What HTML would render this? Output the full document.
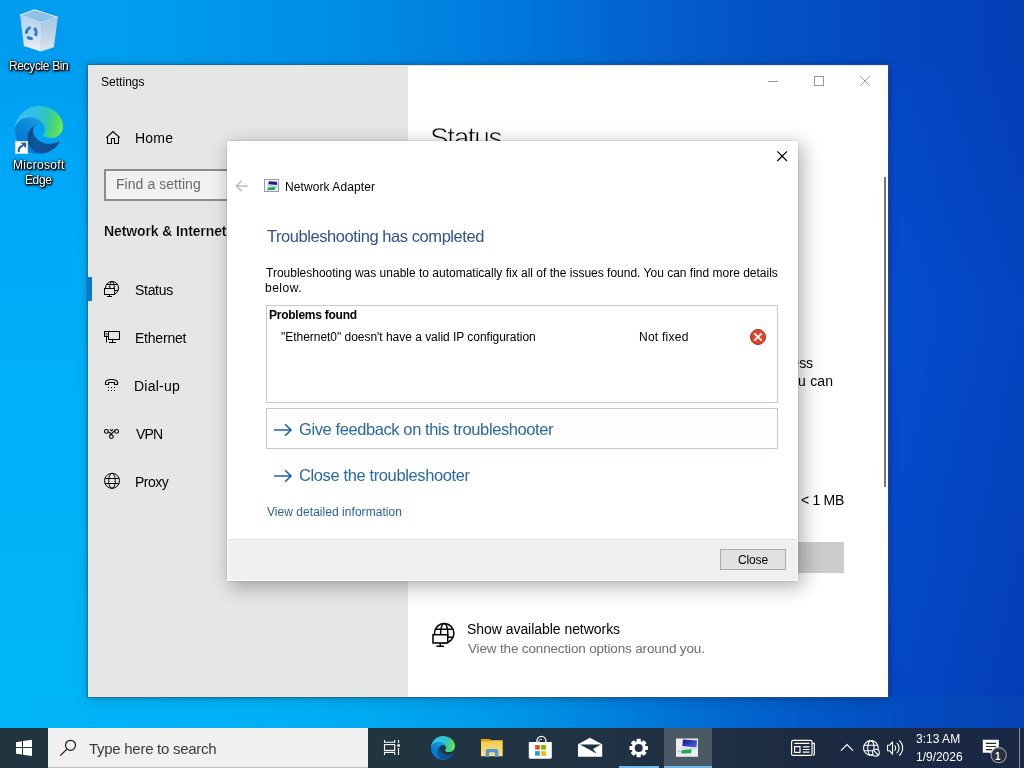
<!DOCTYPE html>
<html>
<head>
<meta charset="utf-8">
<title>Desktop</title>
<style>
*{box-sizing:border-box;margin:0;padding:0}
html,body{width:1024px;height:768px;overflow:hidden;background:#0a6fd4}
body{position:relative;font-family:"Liberation Sans",sans-serif;color:#000}
.abs{position:absolute}
.t{position:absolute;white-space:nowrap;line-height:normal;will-change:transform}
#wp-top{left:0;top:0;width:1024px;height:66px;background:linear-gradient(to right,#009cf0 0px,#009df0 120px,#0095ec 250px,#008ce7 350px,#0080e0 454px,#0170d6 560px,#0460cc 654px,#0454c5 750px,#044ac0 854px,#0444bb 930px,#043fb6 1024px)}
#wp-bot{left:0;top:696px;width:1024px;height:32px;background:linear-gradient(to right,#00b5f7 0px,#00aff4 300px,#00a6ef 400px,#0098e9 500px,#0084df 600px,#026dd3 700px,#035bc9 800px,#044cc0 900px,#0442b6 1024px)}
#wp-left{left:0;top:66px;width:88px;height:630px;background:linear-gradient(to bottom,#009ff1 0px,#00a9f8 134px,#00b1f8 334px,#00b4f7 534px,#00b5f7 630px)}
#wp-right{left:888px;top:66px;width:136px;height:630px;background:linear-gradient(to right,#054ccb 0px,#0447c4 62px,#0441ba 136px)}
#wp-right i{position:absolute;left:0;top:0;width:136px;height:630px;background:linear-gradient(to bottom,rgba(0,20,120,.08) 0px,rgba(0,40,160,.04) 120px,rgba(10,90,240,.10) 240px,rgba(0,40,150,.05) 500px,rgba(0,30,140,.10) 630px)}
#settings{left:88px;top:65px;width:800px;height:632px;background:#fff;box-shadow:0 0 0 1px rgba(80,80,92,.5),0 0 5px rgba(0,0,0,.28),0 3px 12px rgba(0,0,0,.14)}
#side{left:0;top:0;width:320px;height:632px;background:#e6e6e6}
#search{left:16px;top:104px;width:288px;height:32px;border:2px solid #8c8c8c;background:#f1f1f1}
#accent{left:0;top:212px;width:4px;height:24px;background:#0078d7}
#tophl{left:0;top:0;width:800px;height:1px;background:rgba(205,230,250,.85)}
#sb{left:796px;top:112px;width:2px;height:310px;background:#767676}
#graybar{left:600px;top:477px;width:156px;height:31px;background:#ccc}
#dialog{left:227px;top:141px;width:571px;height:440px;background:#fff;box-shadow:0 0 1.500px rgba(0,0,0,.3),4px 5px 18px 1px rgba(0,0,0,.30)}
#dfoot{left:1px;top:398px;width:569px;height:41px;background:#f0f0f0;border-top:1px solid #dfdfdf}
#pbox{left:39px;top:164px;width:512px;height:98px;border:1px solid #c9c9c9;background:#fff}
#fbox{left:39px;top:267px;width:512px;height:41px;border:1px solid #bccbd8;background:#fefeff}
#closebtn{left:493px;top:408px;width:66px;height:21px;border:1px solid #adadad;background:#e1e1e1}
#taskbar{left:0;top:728px;width:1024px;height:40px;background:linear-gradient(to right,#20353f 0px,#213540 400px,#203243 600px,#1c2b42 800px,#1a2745 1024px)}
#tsearch{left:48px;top:0;width:320px;height:40px;background:#f0f0f0;border-top:1px solid #f6f6f6;border-bottom:1px solid #bdbdbd}
#tactive{left:664px;top:0;width:48px;height:40px;background:#4b5965}
.ul{position:absolute;height:2px;top:38px;background:#76b9ed}
svg{position:absolute;overflow:visible}
</style>
</head>
<body>
<div id="wp-top" class="abs"></div>
<div id="wp-bot" class="abs"></div>
<div id="wp-left" class="abs"></div>
<div id="wp-right" class="abs"><i></i></div>

<svg width="0" height="0" style="left:0;top:0">
 <defs>
  <linearGradient id="eg1" gradientUnits="userSpaceOnUse" x1="58.7" y1="177" x2="237" y2="177"><stop offset="0" stop-color="#0c59a4"/><stop offset="1" stop-color="#114a8b"/></linearGradient>
  <linearGradient id="eg2" gradientUnits="userSpaceOnUse" x1="157.3" y1="99.8" x2="45.9" y2="221"><stop offset="0" stop-color="#1b9de2"/><stop offset=".16" stop-color="#1595df"/><stop offset=".67" stop-color="#0680d7"/><stop offset="1" stop-color="#0078d4"/></linearGradient>
  <linearGradient id="eg3" gradientUnits="userSpaceOnUse" x1="20" y1="60" x2="250" y2="110"><stop offset="0" stop-color="#35c1f1"/><stop offset=".35" stop-color="#30c2e2"/><stop offset=".62" stop-color="#2fc6b8"/><stop offset=".85" stop-color="#4fd86a"/><stop offset="1" stop-color="#6ee860"/></linearGradient>
  <radialGradient id="eg4" gradientUnits="userSpaceOnUse" cx="161" cy="182" r="95"><stop offset=".7" stop-color="#000" stop-opacity="0"/><stop offset=".86" stop-color="#000" stop-opacity=".3"/><stop offset="1" stop-color="#000" stop-opacity=".5"/></radialGradient>
  <symbol id="edge" viewBox="0 0 256 256">
   <path fill="url(#eg1)" d="M231,190.500c-3.400,1.800-6.900,3.400-10.500,4.700c-11.500,4.300-23.600,6.500-35.900,6.500c-47.300,0-88.500-32.500-88.500-74.300c0.100-11.400,6.400-21.900,16.400-27.300c-42.800,1.800-53.800,46.400-53.800,72.500c0,73.900,68.100,81.400,82.800,81.400c7.900,0,19.800-2.300,27-4.600l1.300-0.400c27.600-9.500,51-28.100,66.600-52.800c1.200-1.900,0.600-4.400-1.200-5.600C233.900,189.800,232.300,189.800,231,190.500z"/>
   <path fill="url(#eg4)" opacity=".35" d="M231,190.500c-3.400,1.800-6.900,3.400-10.500,4.700c-11.500,4.300-23.600,6.500-35.900,6.500c-47.300,0-88.500-32.500-88.500-74.300c0.100-11.400,6.400-21.900,16.400-27.300c-42.800,1.800-53.800,46.400-53.800,72.500c0,73.900,68.100,81.400,82.800,81.400c7.900,0,19.800-2.300,27-4.600l1.300-0.400c27.600-9.500,51-28.100,66.600-52.800c1.200-1.900,0.600-4.400-1.200-5.600C233.900,189.800,232.300,189.800,231,190.500z"/>
   <path fill="url(#eg2)" d="M105.700,241.400c-8.900-5.500-16.600-12.800-22.700-21.300c-26.300-36-18.400-86.500,17.600-112.800c3.800-2.700,7.700-5.200,11.900-7.200c3.100-1.500,8.400-4.100,15.500-4c10.100,0.100,19.600,4.900,25.700,13c4,5.400,6.300,11.900,6.400,18.700c0-0.200,24.500-79.600-80-79.600c-43.900,0-80,41.700-80,78.200c-0.200,19.300,4,38.500,12.100,56c27.600,58.800,94.800,87.600,156.400,67.100C147.500,256.100,124.500,253,105.700,241.400L105.700,241.400z"/>
   <path fill="url(#eg3)" d="M152.300,148.900c-0.800,1-3.300,2.500-3.300,5.700c0,2.600,1.700,5.100,4.700,7.200c14.400,10,41.500,8.700,41.600,8.700c10.700,0,21.100-2.900,30.300-8.300c18.800-11,30.400-31.100,30.400-52.900c0.300-22.400-8-37.300-11.300-43.900C223.500,23.900,177.700,0,128,0C58,0,1,56.200,0,126.200c0.500-36.500,36.800-66,80-66c3.500,0,23.500,0.300,42,10.100c16.300,8.600,24.900,18.900,30.800,29.200c6.200,10.700,7.300,24.100,7.300,29.500C160.100,134.300,157.400,142.300,152.300,148.900z"/>
  </symbol>
  <linearGradient id="rbL" x1="0" y1="0" x2="0" y2="1"><stop offset="0" stop-color="#b9d3ea"/><stop offset=".55" stop-color="#cddff0"/><stop offset="1" stop-color="#edf1f5"/></linearGradient>
  <linearGradient id="rbR" x1="0" y1="0" x2="0" y2="1"><stop offset="0" stop-color="#a9c8e4"/><stop offset=".6" stop-color="#c3d6e8"/><stop offset="1" stop-color="#e3e6ea"/></linearGradient>
 </defs>
</svg>
<!-- Recycle Bin -->
<svg style="left:0;top:0" width="80" height="60" viewBox="0 0 80 60">
 <path d="M20.200 15 L34.700 9.800 L57.700 17.300 L41.200 23 Z" fill="#8fc0e6" stroke="#d6e8f6" stroke-width="1.200" stroke-linejoin="round"/>
 <path d="M20.200 15.500 L41.200 23.500 L40.800 51.600 L23.900 46 Z" fill="url(#rbL)"/>
 <path d="M41.200 23.500 L57.700 17.800 L53.900 47.300 L40.800 51.600 Z" fill="url(#rbR)"/>
 <g fill="none" stroke="#2a7bd1" stroke-width="3.100" transform="rotate(12 31.300 32.800)">
  <path d="M26.700 34.500 A4.800 5.400 0 0 1 29.600 27.700" />
  <path d="M33.200 27.800 A4.800 5.400 0 0 1 35.800 34.800" />
  <path d="M33.700 37.700 A4.800 5.400 0 0 1 28.300 37.300" />
 </g>
</svg>
<!-- Edge -->
<svg style="left:15px;top:106px" width="48" height="48"><use href="#edge" width="48" height="48"/></svg>
<svg style="left:15px;top:141px" width="13" height="13" viewBox="0 0 13 13">
 <rect x="0.500" y="0.500" width="12" height="12" fill="#fff" stroke="#d0d8e0" stroke-width="1"/>
 <path d="M3.600 11.200C3.400 7.600 5 5.600 8 4.600" stroke="#1d5db6" stroke-width="2.100" fill="none"/>
 <path d="M5.600 1.800L11.200 1.600L11 7.200Z" fill="#1d5db6"/>
</svg>


<div id="settings" class="abs">
  <div id="side" class="abs">
    <div id="search" class="abs"></div>
    <div id="accent" class="abs"></div>
  </div>
  <div id="tophl" class="abs"></div>
  <div id="sb" class="abs"></div>
  <div id="graybar" class="abs"></div>
</div>
<svg style="left:0;top:0" width="1024" height="768" viewBox="0 0 1024 768" fill="none" stroke="#000" stroke-width="1">
 <!-- window controls (inactive gray) -->
 <g stroke="#999">
  <path d="M768 81.500H778"/>
  <rect x="814.500" y="76.500" width="9" height="9"/>
  <path d="M860.300 76.300L869.700 85.700M869.700 76.300L860.300 85.700"/>
 </g>
 <!-- home -->
 <path d="M106.300 137.700L113 131.500L119.700 137.700" stroke-width="1.100"/>
 <path d="M107.500 136.800V143.500H111.500V138.500H114.500V143.500H118.500V136.800" stroke-width="1.100"/>
 <!-- status: globe + monitor -->
 <g>
  <circle cx="112" cy="288" r="6.500"/>
  <ellipse cx="112" cy="288" rx="2.300" ry="6.500"/>
  <path d="M106.500 284.500H117.500M114.500 290.500H118"/>
  <rect x="104.500" y="288.500" width="10" height="6" fill="#e6e6e6"/>
  <path d="M109.500 294.500V296.500M107 296.500H112"/>
 </g>
 <!-- ethernet -->
 <g>
  <rect x="108.500" y="331.500" width="11" height="8"/>
  <rect x="104.500" y="331.500" width="4" height="5"/>
  <path d="M105.500 333.500H107.500M105.500 334.500L106.500 335.500L107.500 334.500" stroke-width=".8"/>
  <path d="M106.500 336.500V342.500M112.500 339.500V342.500M109 342.500H116"/>
 </g>
 <!-- dial-up -->
 <g>
  <path d="M105.500 384.500V382.600Q105.500 379.500 111.500 379.500Q117.500 379.500 117.500 382.600V384.500H114.500V382.500H108.500V384.500Z" stroke-width="1.100" stroke-linejoin="round"/>
  <g fill="#000" stroke="none">
   <rect x="108" y="387" width="1" height="1"/><rect x="111" y="387" width="1" height="1"/><rect x="114" y="387" width="1" height="1"/>
   <rect x="108" y="390" width="1" height="1"/><rect x="111" y="390" width="1" height="1"/><rect x="114" y="390" width="1" height="1"/>
  </g>
 </g>
 <!-- vpn -->
 <g stroke-width="1.100">
  <circle cx="106.400" cy="431.400" r="1.900"/>
  <circle cx="116.600" cy="431.400" r="1.900"/>
  <circle cx="111.400" cy="436.600" r="1.900"/>
  <path d="M108.300 431.700L111.300 433.700M115.200 430.100L109.900 435.400M110 429.300L111.500 430.800L113 429.300"/>
 </g>
 <!-- proxy globe -->
 <g>
  <circle cx="112" cy="480.800" r="7.500"/>
  <ellipse cx="112" cy="480.800" rx="3.300" ry="7.500"/>
  <path d="M105 478.500H119M105 483.500H119"/>
 </g>
 <!-- show available networks -->
 <g stroke-width="1.500">
  <circle cx="444.200" cy="633.250" r="9.750"/>
  <ellipse cx="444.200" cy="633.250" rx="3.600" ry="9.750"/>
  <path d="M436 629.200H452.500M447.500 637.300H453"/>
  <rect x="433" y="634.750" width="14.700" height="8.200" fill="#fff"/>
  <path d="M440.300 643V646M436.500 646.200H444"/>
 </g>
</svg>

<span class="t" id="st" style="left:101.30px;top:75.00px;font-size:12px;letter-spacing:0.029px;color:#000">Settings</span>
<span class="t" id="hm" style="left:135.25px;top:130.00px;font-size:14px;letter-spacing:0.200px;color:#000">Home</span>
<span class="t" id="fs" style="left:116.00px;top:176.00px;font-size:14px;letter-spacing:0.054px;color:#6a6a6a">Find a setting</span>
<span class="t" id="ni" style="left:104.20px;top:223.00px;font-size:14px;letter-spacing:-0.118px;color:#000;font-weight:700;-webkit-text-stroke:.2px #e6e6e6">Network &amp; Internet</span>
<span class="t" id="s1" style="left:134.75px;top:282.00px;font-size:14px;letter-spacing:-0.300px;color:#000">Status</span>
<span class="t" id="s2" style="left:134.75px;top:330.00px;font-size:14px;letter-spacing:-0.214px;color:#000">Ethernet</span>
<span class="t" id="s3" style="left:134.40px;top:378.00px;font-size:14px;letter-spacing:0.233px;color:#000">Dial-up</span>
<span class="t" id="s4" style="left:136.30px;top:426.00px;font-size:14px;letter-spacing:-0.900px;color:#000">VPN</span>
<span class="t" id="s5" style="left:135.20px;top:474.00px;font-size:14px;letter-spacing:-0.500px;color:#000">Proxy</span>
<span class="t" id="hd" style="left:430.00px;top:122.00px;font-size:28px;letter-spacing:-1.400px;color:#000;-webkit-text-stroke:.7px #fff">Status</span>
<span class="t" id="ac" style="left:769.70px;top:355.00px;font-size:14px;letter-spacing:-0.100px;color:#000">access</span>
<span class="t" id="yc" style="left:782.90px;top:373.00px;font-size:14px;letter-spacing:0.167px;color:#000">you can</span>
<span class="t" id="mb" style="left:800.60px;top:492.00px;font-size:14px;letter-spacing:-0.280px;color:#000">&lt; 1 MB</span>
<span class="t" id="sa" style="left:466.80px;top:621.00px;font-size:14px;letter-spacing:-0.045px;color:#000">Show available networks</span>
<span class="t" id="vc" style="left:467.80px;top:641.00px;font-size:13.5px;letter-spacing:-0.158px;color:#6e6e6e">View the connection options around you.</span>

<div id="dialog" class="abs">
  <div id="pbox" class="abs"></div>
  <div id="fbox" class="abs"></div>
  <div id="dfoot" class="abs"></div>
  <div id="closebtn" class="abs"></div>
</div>
<svg style="left:0;top:0" width="1024" height="768" viewBox="0 0 1024 768" fill="none">
 <!-- back arrow -->
 <path d="M248 186H236.600M241.700 180.800L236.400 186L241.700 191.200" stroke="#bdbdbd" stroke-width="1.400"/>
 <!-- network adapter icon -->
 <g>
  <rect x="264.500" y="179.500" width="14" height="12" fill="#f4f6fa" stroke="#9a9aae"/>
  <path d="M269 181.200L276.800 181.800L277.300 185L268.200 184.300Z" fill="#1b1b8c"/>
  <path d="M267.300 185.300L277 186L277 186.800L267.300 186.300Z" fill="#7fb4ee"/>
  <path d="M268 187.500L275.500 187L274.800 190L267.200 190.200Z" fill="#2aa457"/>
  <path d="M275.500 187L277.600 186.500L277.300 189.500L274.800 190Z" fill="#bfeecf"/>
 </g>
 <!-- dialog close X -->
 <path d="M777.300 151.300L787 161M787 151.300L777.300 161" stroke="#000" stroke-width="1.200"/>
 <!-- error icon -->
 <circle cx="758" cy="337" r="7.500" fill="#e2442b" stroke="#a93216" stroke-width="1"/>
 <path d="M754.300 333.300L761.700 340.700M761.700 333.300L754.300 340.700" stroke="#fff" stroke-width="1.900"/>
 <!-- link arrows -->
 <g stroke="#1f62a4" stroke-width="1.600">
  <path d="M274 430H290.800M285.100 424.200L291 430L285.100 435.800"/>
  <path d="M274 476H290.800M285.100 470.200L291 476L285.100 481.800"/>
 </g>
</svg>


<div id="taskbar" class="abs">
  <div id="tsearch" class="abs"></div>
  <div id="tactive" class="abs"></div>
  <div class="ul" style="left:619px;width:40px"></div>
  <div class="ul" style="left:664px;width:48px"></div>
</div>
<svg style="left:0;top:0" width="1024" height="768" viewBox="0 0 1024 768" fill="none">
 <defs>
  <linearGradient id="fold" x1="0" y1="0" x2="0" y2="1"><stop offset="0" stop-color="#f7c843"/><stop offset="1" stop-color="#fddf86"/></linearGradient>
  <linearGradient id="nmon" x1="0" y1="0" x2="1" y2="1"><stop offset="0" stop-color="#15158a"/><stop offset="1" stop-color="#4a6ae0"/></linearGradient>
 </defs>
 <!-- windows logo -->
 <g fill="#fff">
  <path d="M16 742.200L22 741.300V747H16Z"/>
  <path d="M23 741.100L32 739.800V747H23Z"/>
  <path d="M16 748H22V754.600L16 753.700Z"/>
  <path d="M23 748H32V756L23 754.800Z"/>
 </g>
 <!-- search glass -->
 <circle cx="70.500" cy="745.300" r="5" stroke="#1a1a1a" stroke-width="1.200"/>
 <path d="M66.900 749.100L60.300 755.600" stroke="#1a1a1a" stroke-width="1.300"/>
 <!-- task view -->
 <g stroke="#fff" stroke-width="1.100">
  <path d="M384.500 740V742.300H394.700V740"/>
  <rect x="384.500" y="744.600" width="10.200" height="5.800"/>
  <path d="M384.500 755V752.400H394.700V755"/>
  <path d="M398.500 740V743M398.500 748V755"/>
  <rect x="397.300" y="744.300" width="2.600" height="2.400" fill="#fff" stroke="none"/>
 </g>
 <!-- edge -->
 <use href="#edge" x="431" y="736" width="24" height="24"/>
 <!-- file explorer -->
 <g>
  <path d="M481 739H489.300L490.800 740.200H502.700V756.200H481Z" fill="url(#fold)"/>
  <path d="M481 739H489.300L490.800 740.200V741.500H481Z" fill="#e3a21a"/>
  <path d="M485.700 757V751.200Q485.700 749 488 749H496.200Q498.400 749 498.400 751.200V757H495V753.500Q495 752.300 493.800 752.300H490.200Q489 752.300 489 753.500V757Z" fill="#4a9bdb"/>
 </g>
 <!-- store -->
 <g>
  <path d="M536.900 742V740.800A4.500 4.500 0 0 1 545.900 740.800V742" stroke="#fff" stroke-width="1.300"/>
  <path d="M538.800 742V741.300A2 2 0 0 1 541.800 739.600" stroke="#fff" stroke-width="1"/>
  <path d="M528.800 742H551.800V757.300Q551.800 758.800 550.300 758.800H530.300Q528.800 758.800 528.800 757.300Z" fill="#fff"/>
  <rect x="535.100" y="745.100" width="4.700" height="4.500" fill="#e5512d"/>
  <rect x="541.100" y="745.100" width="4.800" height="4.500" fill="#7db700"/>
  <rect x="535.100" y="751.100" width="4.700" height="4.600" fill="#1ba1e6"/>
  <rect x="541.100" y="751.100" width="4.800" height="4.600" fill="#fbb700"/>
 </g>
 <!-- mail -->
 <g>
  <path d="M578 744.200L589.900 737.800L602.200 744.200V756.800H578Z" fill="#fff"/>
  <path d="M580 744.400H601L593 749L596.800 753.800Z" fill="#203344"/>
 </g>
 <!-- gear -->
 <g transform="translate(638.700 748)">
  <g fill="#fff">
   <rect x="-2.100" y="-9.200" width="4.200" height="18.400" rx=".6"/>
   <rect x="-2.100" y="-9.200" width="4.200" height="18.400" rx=".6" transform="rotate(45)"/>
   <rect x="-2.100" y="-9.200" width="4.200" height="18.400" rx=".6" transform="rotate(90)"/>
   <rect x="-2.100" y="-9.200" width="4.200" height="18.400" rx=".6" transform="rotate(135)"/>
   <circle r="7"/>
  </g>
  <circle r="4" fill="#203244"/>
 </g>
 <!-- network adapter (active) -->
 <g>
  <rect x="676" y="738.500" width="22" height="18.300" fill="#eeeaf2"/>
  <path d="M683 739.500L697 740.500L696.500 747.500L682.300 746Z" fill="url(#nmon)"/>
  <path d="M680 747.500L695.500 748.600V749.600L680 748.500Z" fill="#c6d6f2"/>
  <path d="M682 750L692 749.200L691 753.200L681 753.600Z" fill="#1fa84f"/>
  <path d="M692 749.200L696 748.800L695.500 752.500L691 753.200Z" fill="#d8f0e0"/>
  <path d="M677.500 751L682 751.500" stroke="#9ab" stroke-width=".8"/>
 </g>
 <!-- news & interests -->
 <g stroke="#fff" stroke-width="1.200">
  <path d="M812 743.300H814.300V754Q814.300 755.400 812.900 755.400"/>
  <rect x="791.600" y="740.400" width="20.400" height="15" rx="1.500"/>
  <path d="M794.300 743.400H809.500M802.800 746.800H809.500M802.800 749.500H809.500M802.800 752.200H809.500"/>
  <rect x="794.600" y="746.600" width="5.400" height="5.800"/>
 </g>
 <!-- chevron -->
 <path d="M841 750.700L847 744.600L853 750.700" stroke="#fff" stroke-width="1.200"/>
 <!-- globe with no-internet -->
 <g stroke="#fff" stroke-width="1.100">
  <circle cx="870.900" cy="748" r="7.400"/>
  <ellipse cx="870.900" cy="748" rx="3.200" ry="7.400"/>
  <path d="M864 745.300H877.800M864 750.700H877.800"/>
  <circle cx="875.900" cy="752.700" r="3.400" fill="#1a2944"/>
  <path d="M873.600 750.400L878.200 755"/>
 </g>
 <!-- speaker -->
 <g stroke="#fff" stroke-width="1.100">
  <path d="M887.500 745.300H889.500L892.500 741.800V754.200L889.500 750.700H887.500Z" stroke-linejoin="round"/>
  <path d="M894.500 745.300A3.600 3.600 0 0 1 894.500 750.700"/>
  <path d="M896.700 742.800A6.800 6.800 0 0 1 896.700 753.200"/>
  <path d="M899.300 740.500A10.200 10.200 0 0 1 899.300 755.500"/>
 </g>
 <!-- action center -->
 <g>
  <path d="M982.800 739.800H998.800V752.800H993.500L993.500 756.300L989.800 752.800H982.800Z" fill="#fff"/>
  <path d="M986 743.300H996M986 746.500H996M986 749.700H992" stroke="#1b2844" stroke-width="1.200"/>
  <circle cx="998.700" cy="755.200" r="7.600" fill="#2b303c" stroke="#9a9ca2" stroke-width="1.100"/>
 </g>
 <!-- show desktop separator -->
 <path d="M1019.500 728V768" stroke="#8a8f9c" stroke-width="1"/>
</svg>


<span class="t" id="rb" style="left:9.20px;top:59.00px;font-size:12px;letter-spacing:-0.360px;color:#fff;text-shadow:1px 1px 2px #000,0 0 3px rgba(0,0,0,.9),1px 1px 1px #000,0 1px 3px #000">Recycle Bin</span>
<span class="t" id="ms" style="left:12.70px;top:158.00px;font-size:12px;letter-spacing:0.325px;color:#fff;text-shadow:1px 1px 2px #000,0 0 3px rgba(0,0,0,.9),1px 1px 1px #000,0 1px 3px #000">Microsoft</span>
<span class="t" id="eg" style="left:24.80px;top:173.00px;font-size:12px;letter-spacing:-0.400px;color:#fff;text-shadow:1px 1px 2px #000,0 0 3px rgba(0,0,0,.9),1px 1px 1px #000,0 1px 3px #000">Edge</span>
<span class="t" id="na" style="left:285.00px;top:180.00px;font-size:12px;letter-spacing:0.086px;color:#000">Network Adapter</span>
<span class="t" id="th" style="left:266.90px;top:227.00px;font-size:16.5px;letter-spacing:-0.436px;color:#31518f">Troubleshooting has completed</span>
<span class="t" id="b1" style="left:266.00px;top:266.00px;font-size:12px;letter-spacing:0.000px;color:#000">Troubleshooting was unable to automatically fix all of the issues found. You can find more details</span>
<span class="t" id="b2" style="left:265.00px;top:281.00px;font-size:12px;letter-spacing:0.500px;color:#000">below.</span>
<span class="t" id="pf" style="left:268.80px;top:308.00px;font-size:12px;letter-spacing:-0.254px;color:#000;font-weight:700">Problems found</span>
<span class="t" id="e0" style="left:280.80px;top:330.00px;font-size:12px;letter-spacing:-0.029px;color:#000">&quot;Ethernet0&quot; doesn't have a valid IP configuration</span>
<span class="t" id="nf" style="left:638.50px;top:330.00px;font-size:12px;letter-spacing:0.250px;color:#000">Not fixed</span>
<span class="t" id="gf" style="left:298.75px;top:420.00px;font-size:16.5px;letter-spacing:-0.407px;color:#2869a4">Give feedback on this troubleshooter</span>
<span class="t" id="ct" style="left:298.75px;top:466.00px;font-size:16.5px;letter-spacing:-0.380px;color:#2869a4">Close the troubleshooter</span>
<span class="t" id="vd" style="left:267.00px;top:505.00px;font-size:12px;letter-spacing:0.042px;color:#2a5da8">View detailed information</span>
<span class="t" id="cb" style="left:737.90px;top:553.00px;font-size:12px;letter-spacing:-0.150px;color:#000">Close</span>
<span class="t" id="ts" style="left:88.50px;top:740.00px;font-size:15px;letter-spacing:-0.278px;color:#3a3a3a">Type here to search</span>
<span class="t" id="tm" style="left:916.30px;top:732.00px;font-size:12px;letter-spacing:0.017px;color:#fff">3:13 AM</span>
<span class="t" id="dt" style="left:916.30px;top:750.00px;font-size:12px;letter-spacing:-0.014px;color:#fff">1/9/2026</span>
<span class="t" id="bd" style="left:995.20px;top:751.00px;font-size:10px;letter-spacing:0.000px;color:#fff;font-weight:700">1</span>
</body>
</html>
